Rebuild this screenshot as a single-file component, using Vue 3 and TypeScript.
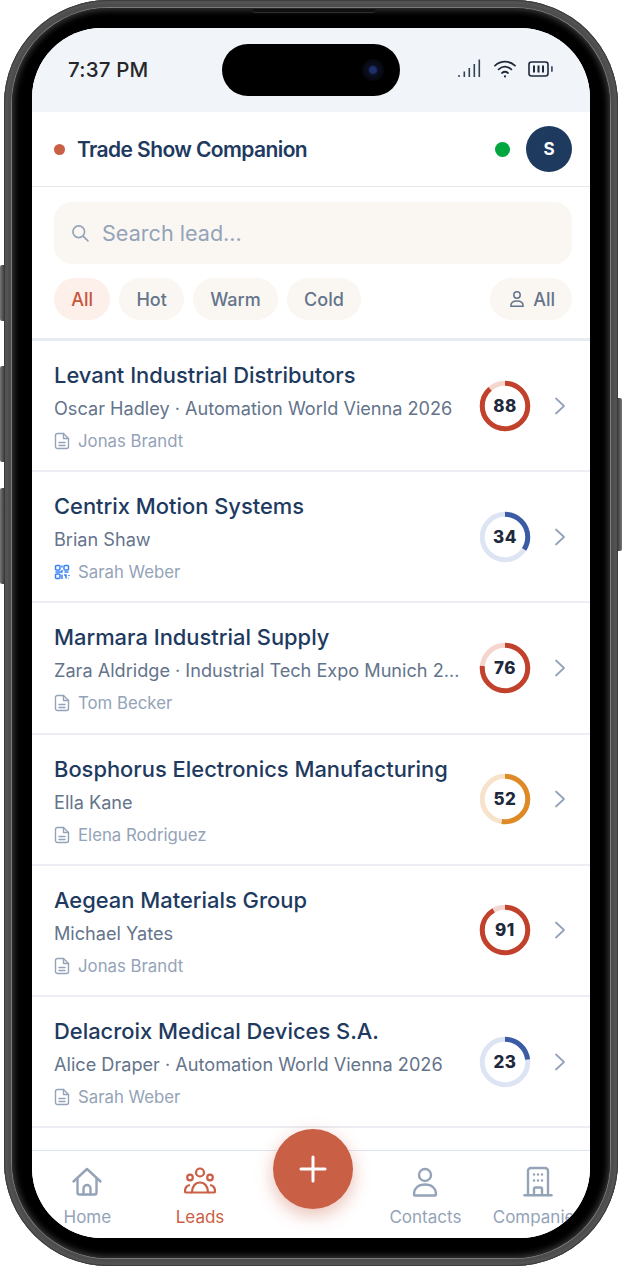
<script setup lang="ts">
type Source = 'doc' | 'qr';

interface Lead {
    company: string;
    contact: string;
    owner: string;
    score: number;
    source: Source;
}

const leads: Lead[] = [
    { company: 'Levant Industrial Distributors', contact: 'Oscar Hadley · Automation World Vienna 2026', owner: 'Jonas Brandt', score: 88, source: 'doc' },
    { company: 'Centrix Motion Systems', contact: 'Brian Shaw', owner: 'Sarah Weber', score: 34, source: 'qr' },
    { company: 'Marmara Industrial Supply', contact: 'Zara Aldridge · Industrial Tech Expo Munich 2026', owner: 'Tom Becker', score: 76, source: 'doc' },
    { company: 'Bosphorus Electronics Manufacturing', contact: 'Ella Kane', owner: 'Elena Rodriguez', score: 52, source: 'doc' },
    { company: 'Aegean Materials Group', contact: 'Michael Yates', owner: 'Jonas Brandt', score: 91, source: 'doc' },
    { company: 'Delacroix Medical Devices S.A.', contact: 'Alice Draper · Automation World Vienna 2026', owner: 'Sarah Weber', score: 23, source: 'doc' }
];

const filters = ['All', 'Hot', 'Warm', 'Cold'];

const radius = 22.75;
const circumference = 2 * Math.PI * radius;

function ringClass(score: number) {
    if (score >= 70) return 'ring--hot';
    if (score >= 40) return 'ring--warm';
    return 'ring--cold';
}

function dash(score: number) {
    return `${(score / 100) * circumference} ${circumference}`;
}
</script>

<template>
    <div class="page">
        <div class="phone">
            <span class="side side--a"></span>
            <span class="side side--b"></span>
            <span class="side side--c"></span>
            <span class="side side--d"></span>
            <span class="speaker"></span>

            <div class="bezel">
                <div class="screen">
                    <div class="island"><span class="camera"></span></div>

                    <div class="status">
                        <span class="status__time">7:37 PM</span>
                        <div class="status__icons">
                            <svg width="24" height="20" viewBox="0 0 24 20" fill="#334155">
                                <rect x="0" y="16" width="2" height="2" rx="1" />
                                <rect x="5.5" y="12.5" width="1.6" height="5.5" />
                                <rect x="10.5" y="9" width="1.6" height="9" />
                                <rect x="15.5" y="5" width="1.6" height="13" />
                                <rect x="20.5" y="0.5" width="1.6" height="17.5" />
                            </svg>
                            <svg width="24" height="20" viewBox="0 0 24 20" fill="none" stroke="#1e293b" stroke-width="1.8" stroke-linecap="round">
                                <path d="M2 6.6C8 1.4 16 1.4 22 6.6" />
                                <path d="M5.6 10.4C9.6 7 14.4 7 18.4 10.4" />
                                <path d="M9 14C11 12.4 13 12.4 15 14" />
                                <circle cx="12" cy="17.4" r="1.1" fill="#1e293b" stroke="none" />
                            </svg>
                            <svg width="26" height="18" viewBox="0 0 26 18" fill="none">
                                <rect x="1" y="2" width="19" height="14" rx="2.5" stroke="#1e293b" stroke-width="1.6" />
                                <rect x="5" y="5.5" width="2" height="7" fill="#1e293b" />
                                <rect x="9.5" y="5.5" width="2" height="7" fill="#1e293b" />
                                <rect x="14" y="5.5" width="2" height="7" fill="#1e293b" />
                                <rect x="23" y="6" width="1.8" height="6" rx="0.9" fill="#475569" />
                            </svg>
                        </div>
                    </div>

                    <header class="topbar">
                        <span class="topbar__dot"></span>
                        <span class="topbar__title">Trade Show Companion</span>
                        <span class="topbar__online"></span>
                        <span class="topbar__avatar">S</span>
                    </header>

                    <section class="controls">
                        <div class="search">
                            <svg width="20" height="20" viewBox="0 0 24 24" fill="none" stroke="#94a3b8" stroke-width="2" stroke-linecap="round">
                                <circle cx="10.5" cy="10.5" r="7" />
                                <path d="M16 16l5.5 5.5" />
                            </svg>
                            <span>Search lead...</span>
                        </div>
                        <div class="filters">
                            <button v-for="(f, i) in filters" :key="f" type="button" class="chip" :class="{ 'chip--active': i === 0 }">{{ f }}</button>
                            <button type="button" class="chip chip--owner">
                                <svg width="18" height="18" viewBox="0 0 18 18" fill="none" stroke="#64748b" stroke-width="1.5">
                                    <circle cx="9" cy="5" r="3.2" />
                                    <path d="M2.8 16.2c0-3.4 2.6-5.2 6.2-5.2s6.2 1.8 6.2 5.2z" stroke-linejoin="round" />
                                </svg>
                                All
                            </button>
                        </div>
                    </section>

                    <main class="list">
                        <article v-for="lead in leads" :key="lead.company" class="lead">
                            <div class="lead__text">
                                <h2 class="lead__company">{{ lead.company }}</h2>
                                <p class="lead__contact">{{ lead.contact }}</p>
                                <p class="lead__owner">
                                    <svg v-if="lead.source === 'doc'" width="16" height="18" viewBox="0 0 16 18" fill="none" stroke="#94a3b8" stroke-width="1.4" stroke-linejoin="round" stroke-linecap="round">
                                        <path d="M3.500 1.500h6L14.500 6.500v8a2 2 0 0 1-2 2h-9a2 2 0 0 1-2-2v-11a2 2 0 0 1 2-2z" />
                                        <path d="M9.500 1.500v5h5" />
                                        <path d="M5 10.500h6M5 13.500h6" />
                                    </svg>
                                    <svg v-else width="16" height="18" viewBox="0 0 16 16" fill="none" stroke="#3b82f6" stroke-width="1.5">
                                        <rect x="1.5" y="1.5" width="4.5" height="4.5" rx="1" />
                                        <rect x="10" y="1.5" width="4.5" height="4.5" rx="1" />
                                        <rect x="1.5" y="10" width="4.5" height="4.5" rx="1" />
                                        <path d="M8 1.500v2M8 6v2H1.500M10.500 8h4M10 11h2v3.500M15 11v1M8 10.500V15M14.500 14.500h.5" />
                                    </svg>
                                    {{ lead.owner }}
                                </p>
                            </div>

                            <div class="ring" :class="ringClass(lead.score)">
                                <svg width="52" height="52" viewBox="0 0 52 52">
                                    <circle class="ring__track" cx="26" cy="26" :r="radius" />
                                    <circle class="ring__value" cx="26" cy="26" :r="radius" :stroke-dasharray="dash(lead.score)" transform="rotate(-90 26 26)" />
                                </svg>
                                <span class="ring__score">{{ lead.score }}</span>
                            </div>

                            <svg class="lead__chevron" width="24" height="24" viewBox="0 0 24 24" fill="none" stroke="#94a3b8" stroke-width="1.8" stroke-linecap="round" stroke-linejoin="round">
                                <path d="M8 4.500l8 7.500-8 7.500" />
                            </svg>
                        </article>
                    </main>

                    <nav class="tabs">
                        <a class="tab">
                            <svg width="32" height="32" viewBox="0 0 32 32" fill="none" stroke="currentColor" stroke-width="2.4" stroke-linejoin="round" stroke-linecap="round">
                                <path d="M2.500 15.500L16 3l13.500 12.500" />
                                <path d="M6.500 13v13.500a2 2 0 0 0 2 2h15a2 2 0 0 0 2-2V13" />
                                <path d="M12.500 28.500v-6a3.500 3.500 0 0 1 7 0v6" />
                            </svg>
                            <span>Home</span>
                        </a>
                        <a class="tab tab--active">
                            <svg width="32" height="32" viewBox="0 0 32 32" fill="none" stroke="currentColor" stroke-width="2.2" stroke-linejoin="round">
                                <circle cx="16" cy="6.500" r="4" />
                                <circle cx="6" cy="11.500" r="2.800" />
                                <circle cx="26" cy="11.500" r="2.800" />
                                <path d="M8 26.500c0-6 3.200-10 8-10s8 4 8 10z" />
                                <path d="M8 26.500H2a1 1 0 0 1-1-1c0-3.500 1.500-6 5-6.500M24 26.500h6a1 1 0 0 0 1-1c0-3.500-1.500-6-5-6.500" />
                            </svg>
                            <span>Leads</span>
                        </a>
                        <span class="tab"></span>
                        <a class="tab">
                            <svg width="32" height="32" viewBox="0 0 32 32" fill="none" stroke="currentColor" stroke-width="2.4" stroke-linejoin="round">
                                <circle cx="16" cy="9" r="6" />
                                <path d="M5 28.500c0-6.500 4.500-10 11-10s11 3.500 11 10a1 1 0 0 1-1 1H6a1 1 0 0 1-1-1z" />
                            </svg>
                            <span>Contacts</span>
                        </a>
                        <a class="tab">
                            <svg width="32" height="32" viewBox="0 0 32 32" fill="none" stroke="currentColor" stroke-width="2.4" stroke-linecap="round" stroke-linejoin="round">
                                <path d="M6 29V5a3 3 0 0 1 3-3h14a3 3 0 0 1 3 3v24" />
                                <path d="M2.500 29.300h27" />
                                <path d="M12 29v-6a1.500 1.500 0 0 1 1.500-1.500h5A1.500 1.500 0 0 1 20 23v6" />
                                <path d="M12 8.500h.1M20 8.500h.1M12 14.500h.1M20 14.500h.1M16 8.500h.1M16 14.500h.1" />
                            </svg>
                            <span>Companies</span>
                        </a>
                        <button type="button" class="fab" aria-label="Add lead">
                            <svg width="30" height="30" viewBox="0 0 30 30" stroke="#fff" stroke-width="3" stroke-linecap="round">
                                <path d="M15 3v24M3 15h24" />
                            </svg>
                        </button>
                    </nav>
                </div>
            </div>
        </div>
    </div>
</template>

<style>
html,
body {
    margin: 0;
    background: #fff;
    overflow: hidden;
}
</style>

<style scoped>
* {
    box-sizing: border-box;
}

.page {
    width: 622px;
    height: 1266px;
    padding: 0 4px;
    font-family: Inter, 'Noto Sans', sans-serif;
}

.phone {
    position: relative;
    height: 100%;
    padding: 8px;
    border-radius: 104px;
    background: #4d4d4d;
    box-shadow:
        inset 0 0 0 1px #3c3c3c,
        inset 0 0 0 4px #525252;
}

.side {
    position: absolute;
    width: 5px;
    background: linear-gradient(90deg, #777, #333);
}

.side--a {
    left: -4px;
    top: 265px;
    height: 56px;
    border-radius: 2px 0 0 2px;
}

.side--b {
    left: -4px;
    top: 366px;
    height: 96px;
    border-radius: 2px 0 0 2px;
}

.side--c {
    left: -4px;
    top: 488px;
    height: 96px;
    border-radius: 2px 0 0 2px;
}

.side--d {
    right: -4px;
    top: 398px;
    height: 153px;
    border-radius: 0 2px 2px 0;
    background: linear-gradient(90deg, #333, #777);
}

.speaker {
    position: absolute;
    z-index: 1;
    left: 248px;
    top: 9px;
    width: 124px;
    height: 4px;
    border-bottom: 1px solid #2e2e2e;
    border-radius: 0 0 4px 4px;
    background: #101010;
}

.bezel {
    height: 100%;
    padding: 20px;
    border-radius: 96px;
    background: #000;
    box-shadow:
        0 0 0 1px #7a7a7a,
        inset 0 0 6px 2px #3a3a3a;
}

.screen {
    position: relative;
    display: flex;
    flex-direction: column;
    height: 100%;
    overflow: hidden;
    border-radius: 70px;
    background: #fff;
}

.island {
    position: absolute;
    z-index: 3;
    left: 190px;
    top: 16px;
    width: 178px;
    height: 52px;
    border-radius: 26px;
    background: #000;
}

.camera {
    position: absolute;
    left: 140px;
    top: 15px;
    width: 22px;
    height: 22px;
    border-radius: 50%;
    background: radial-gradient(circle, #1e2f6e 0 3px, #0b1020 5px, #06070d 11px);
}

.status {
    display: flex;
    flex: none;
    align-items: center;
    justify-content: space-between;
    height: 84px;
    padding: 0 36px;
    background: #f1f5f9;
}

.status__time {
    padding-bottom: 1px;
    color: #27272a;
    font-size: 20.5px;
    font-weight: 500;
    letter-spacing: 0.2px;
}

.status__icons {
    display: flex;
    align-items: center;
    gap: 11px;
    margin-bottom: 2px;
}

.topbar {
    display: flex;
    flex: none;
    align-items: center;
    height: 75px;
    padding: 0 18px 0 22px;
    border-bottom: 1px solid #e5e7eb;
}

.topbar__dot {
    width: 11px;
    height: 11px;
    border-radius: 50%;
    background: #c95f44;
}

.topbar__title {
    flex: 1;
    margin-left: 12px;
    color: #1e3a5f;
    font-size: 21px;
    font-weight: 600;
    letter-spacing: -0.6px;
}

.topbar__online {
    width: 15px;
    height: 15px;
    margin-right: 16px;
    border-radius: 50%;
    background: #00a63e;
}

.topbar__avatar {
    display: flex;
    align-items: center;
    justify-content: center;
    width: 46px;
    height: 46px;
    border-radius: 50%;
    background: #1e3a5f;
    color: #fff;
    font-size: 17px;
    font-weight: 700;
}

.controls {
    flex: none;
    padding: 15px 18px 18px 22px;
    border-bottom: 3px solid #e8ebf1;
}

.search {
    display: flex;
    align-items: center;
    gap: 12px;
    height: 62px;
    padding: 0 16px;
    border-radius: 18px;
    background: #faf7f2;
    color: #94a3b8;
    font-size: 21.6px;
}

.filters {
    display: flex;
    gap: 9px;
    margin-top: 14px;
}

.chip {
    display: flex;
    align-items: center;
    height: 42px;
    padding: 0 17.2px;
    border: 0;
    border-radius: 21px;
    background: #faf7f2;
    color: #64748b;
    font-family: inherit;
    font-size: 18px;
    font-weight: 500;
}

.chip--active {
    background: #fdf0ea;
    color: #c8553d;
}

.chip--owner {
    gap: 7px;
    margin-left: auto;
    padding: 0 17px 0 18px;
}

.list {
    flex: 1;
    min-height: 0;
    overflow: hidden;
}

.lead {
    display: flex;
    align-items: center;
    height: 131.2px;
    padding: 0 18px 0 22px;
    border-bottom: 2px solid #eceef3;
}

.lead__text {
    flex: 1;
    min-width: 0;
    padding-top: 2px;
}

.lead__company {
    margin: 0;
    overflow: hidden;
    color: #1e3a5f;
    font-size: 21.9px;
    font-weight: 500;
    line-height: 30px;
    white-space: nowrap;
}

.lead__contact {
    margin: 5px 0 0;
    overflow: hidden;
    color: #64748b;
    font-size: 18.14px;
    line-height: 26px;
    text-overflow: ellipsis;
    white-space: nowrap;
}

.lead__owner {
    display: flex;
    align-items: center;
    gap: 8px;
    margin: 8px 0 0;
    color: #94a3b8;
    font-size: 16.8px;
    line-height: 24px;
}

.ring {
    position: relative;
    flex: none;
    width: 52px;
    height: 52px;
    margin-left: 16px;
}

.ring svg {
    display: block;
}

.ring__track,
.ring__value {
    fill: none;
    stroke-width: 5;
}

.ring--hot .ring__track {
    stroke: #f5d6cf;
}

.ring--hot .ring__value {
    stroke: #c2412d;
}

.ring--warm .ring__track {
    stroke: #f7e3cb;
}

.ring--warm .ring__value {
    stroke: #de8a26;
}

.ring--cold .ring__track {
    stroke: #dde4f3;
}

.ring--cold .ring__value {
    stroke: #3b5ba5;
}

.ring__score {
    position: absolute;
    inset: 0;
    display: flex;
    align-items: center;
    justify-content: center;
    color: #1e293b;
    font-size: 17px;
    font-weight: 800;
    letter-spacing: 0.5px;
}

.lead__chevron {
    flex: none;
    margin-left: 17px;
}

.tabs {
    position: relative;
    display: grid;
    flex: none;
    grid-template-columns: repeat(5, 112.7px);
    height: 88px;
    margin-left: -1px;
    border-top: 1px solid #dfe5ee;
    background: #fff;
}

.tab {
    display: flex;
    flex-direction: column;
    align-items: center;
    padding-top: 15px;
    color: #94a3b8;
    font-size: 17px;
    white-space: nowrap;
}

.tab span {
    margin-top: 9px;
}

.tab--active {
    color: #c95f44;
}

.fab {
    position: absolute;
    left: 242px;
    top: -22px;
    display: flex;
    align-items: center;
    justify-content: center;
    width: 80px;
    height: 80px;
    padding: 0;
    border: 0;
    border-radius: 50%;
    background: #c95f44;
    box-shadow: 0 6px 18px rgba(201, 95, 68, 0.4);
}
</style>
